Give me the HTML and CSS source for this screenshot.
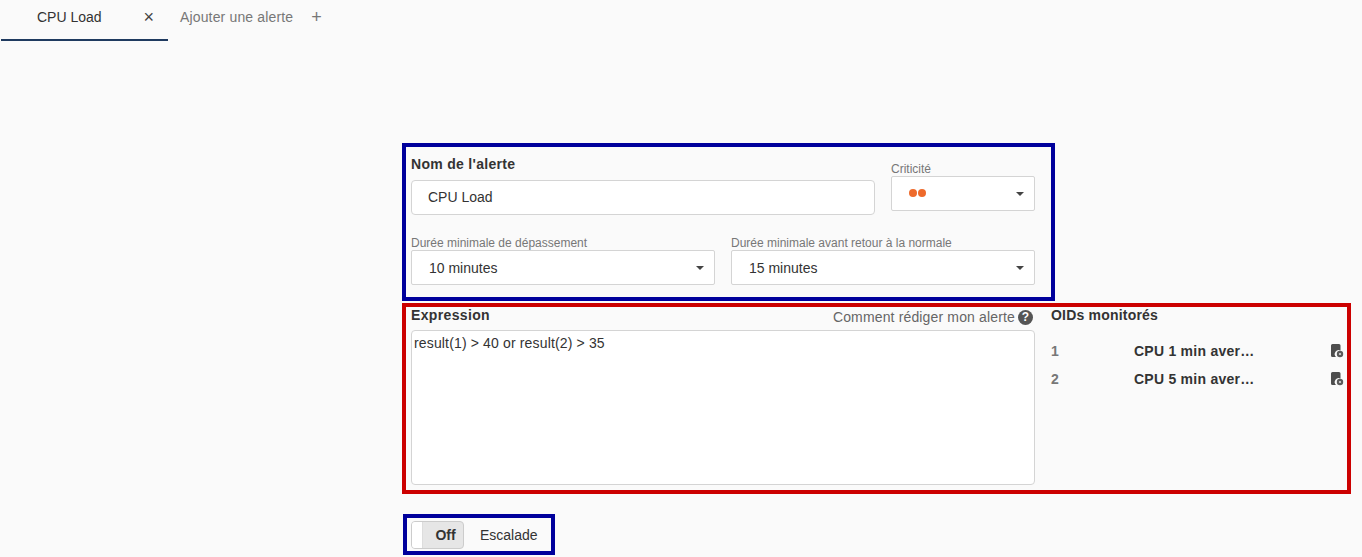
FILE: index.html
```html
<!DOCTYPE html>
<html lang="fr">
<head>
<meta charset="utf-8">
<title>CPU Load</title>
<link rel="stylesheet" href="styles.css">
</head>
<body>
<nav class="tabs">
  <div class="tab active"><span>CPU Load</span><span class="tab-icon close">×</span></div>
  <div class="tab add"><span>Ajouter une alerte</span><span class="tab-icon plus">+</span></div>
</nav>
<main class="main">
  <section class="frame blue general">
    <div class="row top-row">
      <div class="field name-field">
        <label class="title name-title">Nom de l'alerte</label>
        <div class="control input">CPU Load</div>
      </div>
      <div class="field crit-field">
        <label class="small">Criticité</label>
        <div class="control select"><span class="dots"><i></i><i></i></span><b class="caret"></b></div>
      </div>
    </div>
    <div class="row bottom-row">
      <div class="field half">
        <label class="small">Durée minimale de dépassement</label>
        <div class="control select"><span>10 minutes</span><b class="caret"></b></div>
      </div>
      <div class="field half">
        <label class="small">Durée minimale avant retour à la normale</label>
        <div class="control select"><span>15 minutes</span><b class="caret"></b></div>
      </div>
    </div>
  </section>
  <section class="frame red expression">
    <div class="expr-col">
      <div class="expr-head">
        <span class="title">Expression</span>
        <span class="help">Comment rédiger mon alerte <span class="help-icon">?</span></span>
      </div>
      <div class="textarea">result(1) &gt; 40 or result(2) &gt; 35</div>
    </div>
    <div class="oids">
      <div class="title oids-title">OIDs monitorés</div>
      <div class="oid"><span class="oid-num">1</span><span class="oid-name">CPU 1 min aver…</span>
        <svg class="oid-icon" viewBox="0 0 14 14"><path d="M2.500 0h6.500a1.500 1.500 0 0 1 1.500 1.500v5a4 4 0 0 0-4.500 6.500H2.500A1.500 1.500 0 0 1 1 11.500v-10A1.500 1.500 0 0 1 2.500 0z" fill="#4d4d4d"/><circle cx="10" cy="10" r="3.200" fill="#5a5a5a"/><circle cx="10" cy="10" r="1.100" fill="#ddd"/></svg>
      </div>
      <div class="oid"><span class="oid-num">2</span><span class="oid-name">CPU 5 min aver…</span>
        <svg class="oid-icon" viewBox="0 0 14 14"><path d="M2.500 0h6.500a1.500 1.500 0 0 1 1.500 1.500v5a4 4 0 0 0-4.500 6.500H2.500A1.500 1.500 0 0 1 1 11.500v-10A1.500 1.500 0 0 1 2.500 0z" fill="#4d4d4d"/><circle cx="10" cy="10" r="3.200" fill="#5a5a5a"/><circle cx="10" cy="10" r="1.100" fill="#ddd"/></svg>
      </div>
    </div>
  </section>
  <section class="frame blue escalade">
    <div class="toggle"><span class="knob"></span><span class="toggle-label">Off</span></div>
    <span class="escalade-label">Escalade</span>
  </section>
</main>
</body>
</html>
```
FILE: styles.css
```css
* { box-sizing: border-box; }
html, body { margin: 0; height: 557px; overflow: hidden; }
body {
  background: #fafafa;
  color: #333;
  font-family: "Liberation Sans", Arial, sans-serif;
  font-size: 14px;
}
.tabs { display: flex; height: 41px; padding-left: 1px; }
.tab { display: flex; align-items: flex-start; padding-top: 9px; line-height: 16px; }
.tab.active {
  width: 167px;
  padding-left: 36px;
  border-bottom: 2px solid #1f3a5f;
  color: #333;
}
.tab.add { padding-left: 12px; letter-spacing: 0.15px; color: #777; }
.tab-icon { margin-top: 1px; font-size: 18px; line-height: 14px; }
.close { margin-left: 42px; color: #444; }
.plus { margin-left: 18px; color: #777; }

.main { display: flex; flex-direction: column; align-items: flex-start; padding: 102px 0 0 402px; }
.frame { border: 4px solid; }
.blue { border-color: #00009c; }
.red { border-color: #cc0000; }

.general { width: 653px; height: 158px; padding: 0 16px 0 5px; }
.row { display: flex; gap: 16px; }
.top-row { height: 89px; }
.field { display: flex; flex-direction: column; }
.name-field { width: 464px; padding-top: 9px; }
.crit-field { width: 144px; padding-top: 15px; }
.half { width: 304px; }
.title { font-weight: 700; font-size: 14px; line-height: 16px; letter-spacing: 0.3px; color: #333; }
.small { font-size: 12px; line-height: 14px; color: #777; }
.name-title { margin-bottom: 8px; }
.control {
  display: flex;
  align-items: center;
  justify-content: space-between;
  height: 35px;
  padding: 0 10px 0 17px;
  background: #fff;
  border: 1px solid #d4d4d4;
  color: #333;
}
.input { padding: 0 10px 2px 16px; border-radius: 4px; }
.select { border-radius: 2px; }
.dots { display: flex; gap: 1px; padding-bottom: 1px; }
.dots i { width: 8px; height: 8px; border-radius: 50%; background: #ee6a2b; }
.caret { width: 0; height: 0; border: 4px solid transparent; border-top-color: #444; border-bottom-width: 0; }

.expression { display: flex; width: 949px; height: 191px; margin-top: 2px; padding: 0 0 0 5px; }
.expr-col { width: 624px; }
.expr-head {
  display: flex;
  justify-content: space-between;
  align-items: flex-start;
  height: 23px;
  padding: 0 2px 0 0;
  line-height: 16px;
}
.expr-head .title { letter-spacing: 0.35px; }
.help { display: flex; align-items: center; gap: 3px; margin-top: 2px; letter-spacing: 0.15px; color: #666; }
.help-icon {
  display: flex;
  align-items: center;
  justify-content: center;
  width: 15px;
  height: 15px;
  border-radius: 50%;
  background: #555;
  color: #fff;
  font-size: 12px;
  font-weight: 700;
}
.textarea {
  height: 155px;
  padding: 4px 2px;
  background: #fff;
  border: 1px solid #d4d4d4;
  border-radius: 4px;
  line-height: 16px;
  letter-spacing: 0.15px;
}
.oids { width: 295px; margin-left: 16px; }
.oids-title { height: 19px; margin-bottom: 11px; letter-spacing: 0.2px; }
.oid { display: flex; align-items: center; height: 28px; }
.oid-num { width: 83px; font-size: 14px; font-weight: 700; color: #777; }
.oid-name { width: 196px; font-size: 14px; font-weight: 700; letter-spacing: 0.25px; color: #333; }
.oid-icon { width: 14px; height: 14px; }

.escalade { display: flex; align-items: center; width: 152px; height: 41px; margin: 20px 0 0 1px; padding-left: 4px; }
.toggle {
  display: flex;
  width: 53px;
  height: 28px;
  background: #e6e6e6;
  border: 1px solid #ccc;
  border-radius: 4px;
  overflow: hidden;
}
.knob { width: 11px; background: #fff; border-right: 1px solid #ddd; }
.toggle-label { flex: 1; text-align: center; padding-left: 5px; font-weight: 700; font-size: 14px; line-height: 27px; }
.escalade-label { margin-left: 16px; }
```
